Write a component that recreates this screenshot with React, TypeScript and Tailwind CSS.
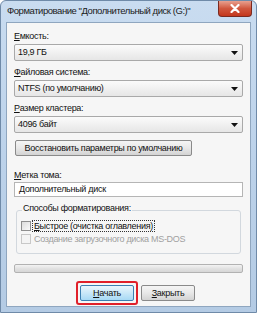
import React from "react";

const font = { fontFamily: '"Liberation Sans", Arial, sans-serif' };

function Select({ value, top }: { value: string; top: string }) {
  return (
    <div
      className={`${top} mx-[7px] h-[17px] flex items-center border border-[#a9a9a9] rounded-[2px] bg-gradient-to-b from-[#fbfbfb] to-[#e6e6e6] pl-[3px] pr-[4px]`}
    >
      <span className="text-[9px] tracking-[-0.3px] leading-none text-[#111]">{value}</span>
      <svg className="ml-auto" width="7" height="4" viewBox="0 0 7 4">
        <path d="M0 0 H7 L3.5 4 Z" fill="#111" />
      </svg>
    </div>
  );
}

function Label({ first, rest, top }: { first: string; rest: string; top: string }) {
  return (
    <div className={`${top} mx-[7px] h-[12px] flex items-center text-[9px] tracking-[-0.3px] leading-none text-[#111] whitespace-nowrap`}>
      <span className="underline underline-offset-[1px]">{first}</span>
      <span>{rest}</span>
    </div>
  );
}

export default function App() {
  return (
    <div
      style={font}
      className="w-[257px] h-[313px] flex flex-col bg-gradient-to-b from-[#c9dcf0] via-[#bcd2ea] to-[#b4cbe4] border border-[#6f8aa8] rounded-t-[6px] overflow-hidden"
    >
      <div className="h-[21px] flex items-start shrink-0">
        <div className="pl-[6px] pt-[5px] text-[9.5px] tracking-[-0.45px] leading-none text-[#1a1a1a] whitespace-nowrap">
          Форматирование "Дополнительный диск (G:)"
        </div>
        <div className="ml-auto mr-[4px] w-[34px] h-[16px] rounded-b-[4px] border border-t-0 border-[#7a2a20] bg-gradient-to-b from-[#e8a08f] via-[#d0573e] to-[#c3361b] flex items-center justify-center">
          <svg width="10" height="9" viewBox="0 0 10 9">
            <path d="M1.5 1 L8.5 8 M8.5 1 L1.5 8" stroke="#fff" strokeWidth="2.2" strokeLinecap="round" />
          </svg>
        </div>
      </div>
      <div className="flex-1 mx-[5px] mb-[5px] border border-[#8fa6bf] bg-[#f6f6f6] flex flex-col">
        <Label first="Е" rest="мкость:" top="mt-[7px]" />
        <Select value="19,9 ГБ" top="mt-[2px]" />
        <Label first="Ф" rest="айловая система:" top="mt-[5px]" />
        <Select value="NTFS (по умолчанию)" top="mt-[2px]" />
        <Label first="Р" rest="азмер кластера:" top="mt-[5px]" />
        <Select value="4096 байт" top="mt-[2px]" />
        <div className="mt-[7px] ml-[8px] w-[177px] h-[16px] flex items-center justify-center border border-[#8a8a8a] rounded-[2px] bg-gradient-to-b from-[#f5f5f5] via-[#e8e8e8] to-[#d3d3d3] text-[9px] tracking-[-0.3px] leading-none text-[#111] whitespace-nowrap">
          Восстановить параметры по умолчанию
        </div>
        <Label first="М" rest="етка тома:" top="mt-[13px]" />
        <div className="mt-[1px] mx-[7px] h-[15px] flex items-center border border-[#b5b5b5] bg-white pl-[4px] text-[9px] tracking-[-0.3px] leading-none text-[#111]">
          Дополнительный диск
        </div>
        <div className="relative mt-[13px] mx-[9px] h-[44px] border border-[#d2d8de] rounded-[3px]">
          <div className="absolute -top-[7px] left-[5px] px-[1px] bg-[#f6f6f6] text-[9px] tracking-[-0.3px] leading-none text-[#111] whitespace-nowrap">
            Способы форматирования:
          </div>
          <div className="mt-[9px] ml-[4px] flex items-center h-[12px]">
            <div className="w-[10px] h-[10px] border border-[#8f8f8f] bg-gradient-to-br from-[#dcdcdc] to-[#fafafa]" />
            <div className="ml-[1px] px-[1px] border border-dotted border-[#333] text-[9px] tracking-[-0.3px] leading-none h-[12px] flex items-center text-[#111] whitespace-nowrap">
              <span className="underline underline-offset-[1px]">Б</span>ыстрое (очистка оглавления)
            </div>
          </div>
          <div className="mt-[1px] ml-[4px] flex items-center h-[12px]">
            <div className="w-[10px] h-[10px] border border-[#c8c8c8] bg-[#f4f4f4]" />
            <div className="ml-[3px] text-[9px] tracking-[-0.3px] leading-none text-[#a0a0a0] whitespace-nowrap">
              Создание загрузочного диска MS-DOS
            </div>
          </div>
        </div>
        <div className="mt-[10px] mx-[7px] h-[9px] border border-[#b2b2b2] rounded-[2px] bg-gradient-to-b from-[#f3f3f3] via-[#e2e2e2] to-[#d6d6d6]" />
        <div className="mt-[8px] flex items-center gap-[3px] pl-[69px]">
          <div className="p-[2px] border-2 border-[#e0202a] rounded-[3px]">
            <div className="w-[54px] h-[16px] flex items-center justify-center border border-[#3c7fb1] rounded-[2px] bg-gradient-to-b from-[#eaf6fd] via-[#c9e8f8] to-[#a7d9f5] text-[9px] tracking-[-0.3px] leading-none text-[#111]">
              <span className="underline underline-offset-[1px]">Н</span>ачать
            </div>
          </div>
          <div className="w-[54px] h-[16px] flex items-center justify-center border border-[#8a8a8a] rounded-[2px] bg-gradient-to-b from-[#f5f5f5] via-[#e8e8e8] to-[#d3d3d3] text-[9px] tracking-[-0.3px] leading-none text-[#111]">
            <span className="underline underline-offset-[1px]">З</span>акрыть
          </div>
        </div>
      </div>
    </div>
  );
}
